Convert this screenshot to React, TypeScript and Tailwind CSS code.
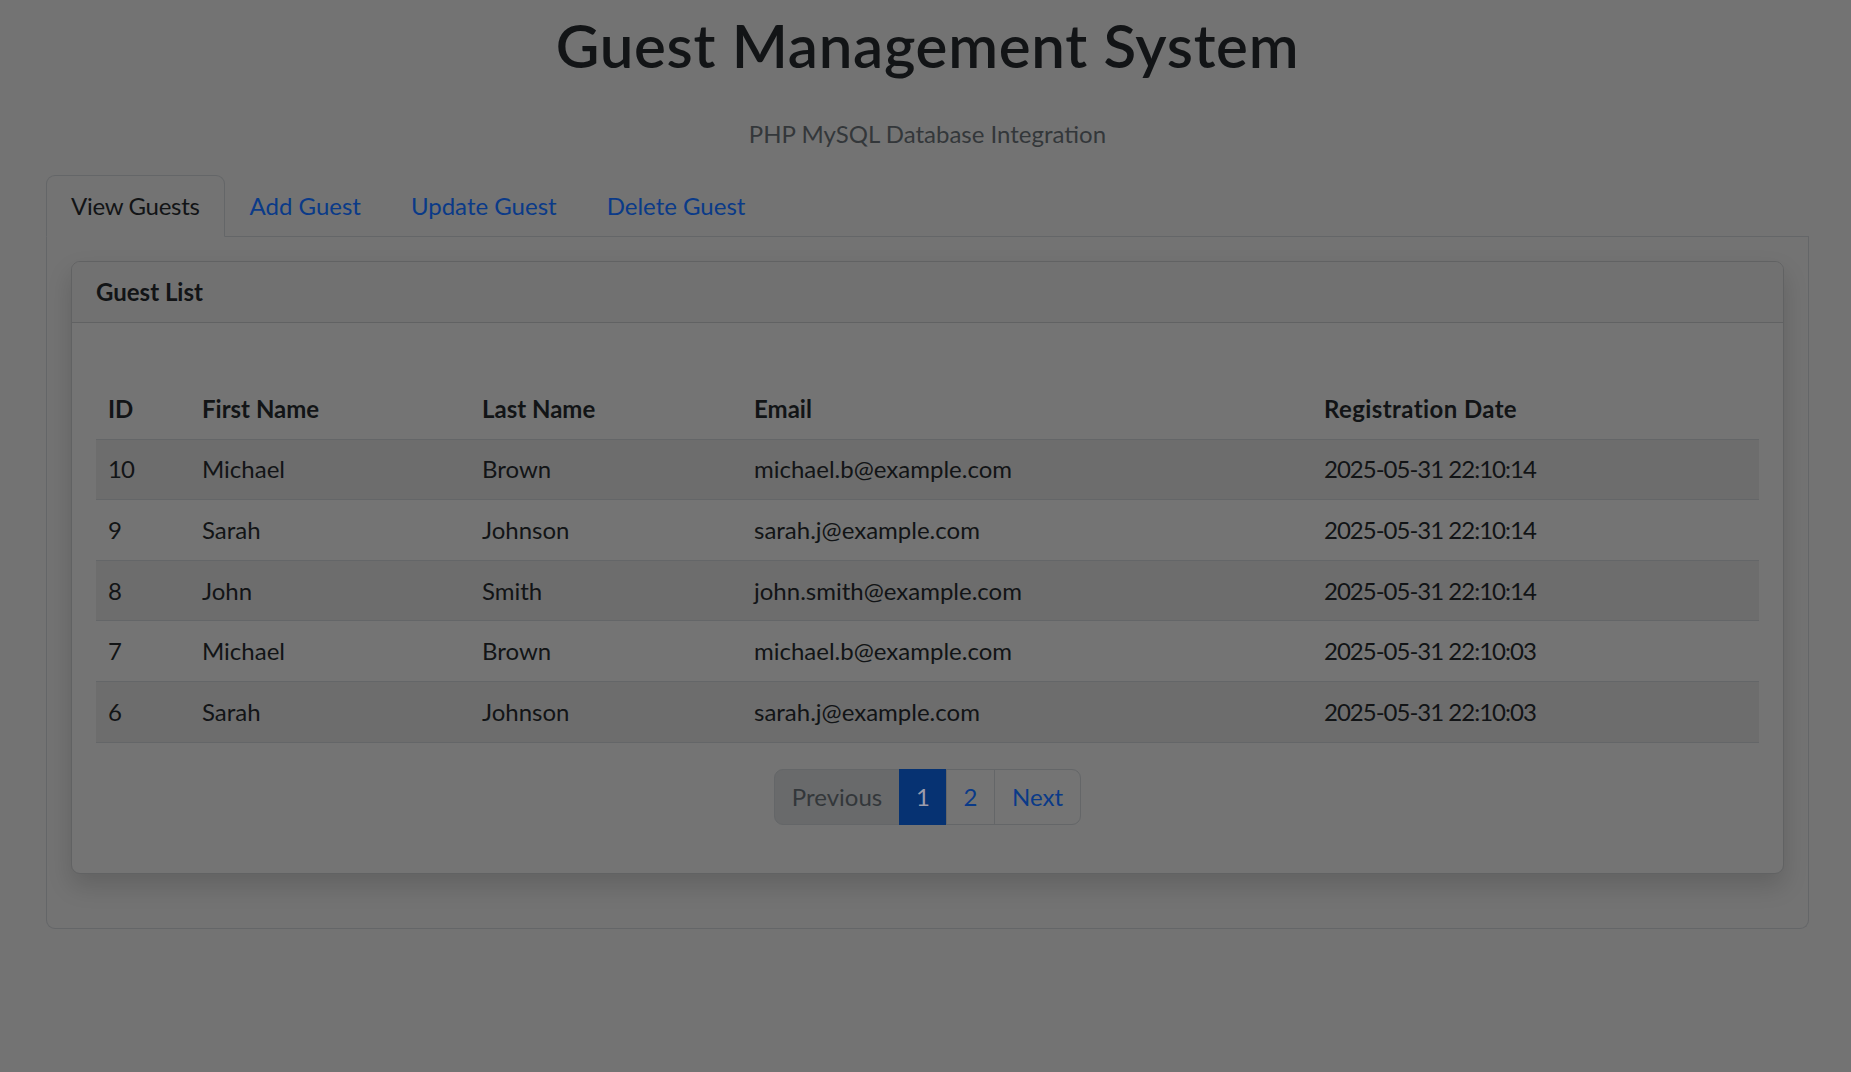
import React from "react";

const rows = [
  { id: 10, first: "Michael", last: "Brown", email: "michael.b@example.com", date: "2025-05-31 22:10:14" },
  { id: 9, first: "Sarah", last: "Johnson", email: "sarah.j@example.com", date: "2025-05-31 22:10:14" },
  { id: 8, first: "John", last: "Smith", email: "john.smith@example.com", date: "2025-05-31 22:10:14" },
  { id: 7, first: "Michael", last: "Brown", email: "michael.b@example.com", date: "2025-05-31 22:10:03" },
  { id: 6, first: "Sarah", last: "Johnson", email: "sarah.j@example.com", date: "2025-05-31 22:10:03" },
];

export default function App() {
  return (
    <div className="min-h-screen bg-[#737373] font-['Lato',sans-serif] text-[24px] leading-[36px] text-[#121416]">
      <div className="pl-[46px] pr-[42px]">
        <h1 className="pt-[9px] text-center text-[60px] leading-[72px] font-semibold tracking-[0.7px] text-[#121416]">
          Guest Management System
        </h1>
        <p className="mt-[35px] text-center text-[#33373a]">PHP MySQL Database Integration</p>

        <nav className="mt-[23px] flex border-b border-[#646668]">
          <div className="-mb-px rounded-t-[9px] border border-[#646668] border-b-transparent bg-[#737373] px-[24px] py-[12px] tracking-[-0.3px] text-[#121416]">
            View Guests
          </div>
          <div className="-mb-px border border-transparent px-[24px] py-[12px] text-[#0a3a88]">Add Guest</div>
          <div className="-mb-px border border-transparent px-[24px] py-[12px] text-[#0a3a88]">Update Guest</div>
          <div className="-mb-px border border-transparent px-[24px] py-[12px] text-[#0a3a88]">Delete Guest</div>
        </nav>

        <div className="rounded-b-[9px] border-x border-b border-[#646668] p-[24px]">
          <div className="mb-[30px] overflow-hidden rounded-[9px] border border-[#616263] bg-[#747474] shadow-[0_12px_24px_rgba(0,0,0,0.15)]">
            <div className="border-b border-[#616263] bg-[#717171] px-[24px] py-[12px] font-bold">Guest List</div>
            <div className="px-[24px] pt-[56px] pb-[24px]">
              <table className="w-full table-fixed border-collapse text-left">
                <colgroup>
                  <col className="w-[94px]" />
                  <col className="w-[280px]" />
                  <col className="w-[272px]" />
                  <col className="w-[570px]" />
                  <col />
                </colgroup>
                <thead>
                  <tr className="border-b border-[#646668]">
                    <th className="px-[12px] py-[11.8px] font-bold">ID</th>
                    <th className="px-[12px] py-[11.8px] font-bold">First Name</th>
                    <th className="px-[12px] py-[11.8px] font-bold">Last Name</th>
                    <th className="px-[12px] py-[11.8px] font-bold">Email</th>
                    <th className="px-[12px] py-[11.8px] font-bold tracking-[0.4px]">Registration Date</th>
                  </tr>
                </thead>
                <tbody>
                  {rows.map((r, i) => (
                    <tr key={r.id} className={`border-b border-[#646668] ${i % 2 === 0 ? "bg-[#6d6d6d]" : ""}`}>
                      <td className="px-[12px] py-[11.8px] tracking-[-0.8px]">{r.id}</td>
                      <td className="px-[12px] py-[11.8px]">{r.first}</td>
                      <td className="px-[12px] py-[11.8px]">{r.last}</td>
                      <td className="px-[12px] py-[11.8px]">{r.email}</td>
                      <td className="px-[12px] py-[11.8px] tracking-[-1px]">{r.date}</td>
                    </tr>
                  ))}
                </tbody>
              </table>

              <div className="mt-[26px] mb-[24px] flex justify-center">
                <div className="flex">
                  <span className="w-[126px] rounded-l-[9px] border border-[#646668] bg-[#696a6b] py-[9px] text-center text-[#33373a]">
                    Previous
                  </span>
                  <span className="-ml-px w-[48px] border border-[#063272] bg-[#063272] py-[9px] text-center text-[#9c9cab]">
                    1
                  </span>
                  <span className="-ml-px w-[49px] border border-[#646668] py-[9px] text-center text-[#0a3a88]">2</span>
                  <span className="-ml-px w-[87px] rounded-r-[9px] border border-[#646668] py-[9px] text-center text-[#0a3a88]">
                    Next
                  </span>
                </div>
              </div>
            </div>
          </div>
        </div>
      </div>
    </div>
  );
}
